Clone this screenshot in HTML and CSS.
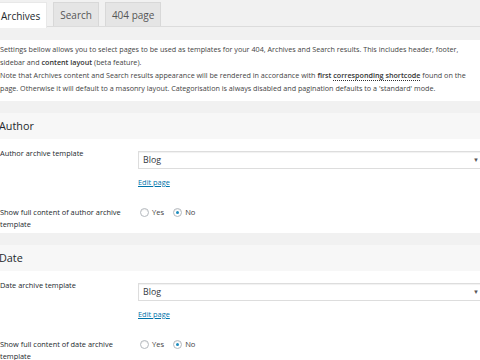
FILE: index.html
```html
<!DOCTYPE html>
<html lang="en">
<head>
    <meta charset="UTF-8">
    <meta name="viewport" content="width=device-width, initial-scale=1.0">
    <title>Archive templates</title>
    <link rel="stylesheet" href="styles.css">
</head>
<body>
    <div class="tabs">
        <span class="tab active">Archives</span>
        <span class="tab">Search</span>
        <span class="tab">404 page</span>
    </div>

    <div class="intro">
        <p>Settings bellow allows you to select pages to be used as templates for your 404, Archives and Search results. This includes header, footer, sidebar and <b>content layout</b> (beta feature).</p>
        <p>Note that Archives content and Search results appearance will be rendered in accordance with <b>first <span class="dotted">corresponding shortcode</span></b> found on the page. Otherwise it will default to a masonry layout. Categorisation is always disabled and pagination defaults to a 'standard' mode.</p>
    </div>

    <div class="section">
        <h2 class="section-title">Author</h2>
        <div class="row">
            <div class="label">Author archive template</div>
            <div class="field">
                <div class="select"><span>Blog</span><span class="arrow">&#9660;</span></div>
                <a class="edit" href="#">Edit page</a>
            </div>
        </div>
        <div class="row radios-row">
            <div class="label">Show full content of author archive template</div>
            <div class="field radios">
                <label><input type="radio" name="author_full"> Yes</label>
                <label><input type="radio" name="author_full" checked> No</label>
            </div>
        </div>
    </div>

    <div class="section">
        <h2 class="section-title">Date</h2>
        <div class="row">
            <div class="label">Date archive template</div>
            <div class="field">
                <div class="select"><span>Blog</span><span class="arrow">&#9660;</span></div>
                <a class="edit" href="#">Edit page</a>
            </div>
        </div>
        <div class="row radios-row">
            <div class="label">Show full content of date archive template</div>
            <div class="field radios">
                <label><input type="radio" name="date_full"> Yes</label>
                <label><input type="radio" name="date_full" checked> No</label>
            </div>
        </div>
    </div>
</body>
</html>
```

FILE: styles.css
```css
body {
    margin: 0;
    background-color: #f1f1f1;
    font-family: "Open Sans", "Noto Sans", sans-serif;
    color: #444;
    font-size: 7.2px;
    overflow: hidden;
}
.tabs {
    display: flex;
    gap: 6px;
    margin-left: -6px;
    padding-top: 2px;
    height: 24px;
    border-bottom: 1px solid #dcdcdc;
}
.tab {
    display: flex;
    align-items: center;
    padding: 0 6px;
    font-size: 10px;
    color: #555;
    background-color: #e5e5e5;
    border: 1px solid #d8d8d8;
    border-bottom: none;
}
.tab.active {
    background-color: #ffffff;
    color: #23282d;
    border-color: #e8e8e8;
    height: 25px;
}
.intro {
    margin-top: 13px;
    background-color: #ffffff;
    padding: 3px 0 6px 0;
    line-height: 13px;
}
.intro p {
    margin: 0;
}
.intro b {
    font-weight: 600;
    color: #333;
}
.dotted {
    border-bottom: 1px dotted #333;
}
.section {
    margin-top: 12px;
    background-color: #ffffff;
}
.section-title {
    margin: 0 0 0 -1px;
    height: 26px;
    line-height: 26px;
    font-size: 10.8px;
    font-weight: normal;
    color: #23282d;
    background-color: #f7f7f7;
}
.row {
    display: flex;
    padding-top: 8px;
}
.label {
    width: 126px;
    flex-shrink: 0;
    padding-right: 12px;
    line-height: 12px;
    font-size: 7.4px;
    color: #23282d;
}
.field {
    flex: 1;
    display: flex;
    flex-direction: column;
}
.select {
    margin-top: 4px;
    height: 16px;
    margin-right: -2px;
    border: 1px solid #dddddd;
    box-shadow: inset 0 1px 1px rgba(0, 0, 0, 0.06);
    display: flex;
    justify-content: space-between;
    align-items: center;
    padding: 0 2px 0 4px;
    font-size: 8.8px;
    color: #32373c;
}
.arrow {
    font-size: 6px;
    color: #555;
}
.edit {
    margin-top: 7px;
    line-height: 12px;
    font-size: 7.4px;
    color: #0073aa;
    text-decoration: underline;
}
.radios-row {
    padding-top: 18px;
    padding-bottom: 3px;
}
.radios {
    flex-direction: row;
    align-items: flex-start;
    gap: 7px;
    line-height: 12px;
    font-size: 7.6px;
}
.radios label {
    display: flex;
    align-items: center;
    gap: 3px;
    color: #444;
}
.radios input {
    appearance: none;
    margin: 0 0 0 2px;
    width: 9px;
    height: 9px;
    border: 1px solid #b4b9be;
    border-radius: 50%;
    background-color: #ffffff;
    box-shadow: inset 0 1px 1px rgba(0, 0, 0, 0.08);
    display: flex;
    align-items: center;
    justify-content: center;
}
.radios input:checked::before {
    content: "";
    width: 3px;
    height: 3px;
    border-radius: 50%;
    background-color: #1e8cbe;
}
```
